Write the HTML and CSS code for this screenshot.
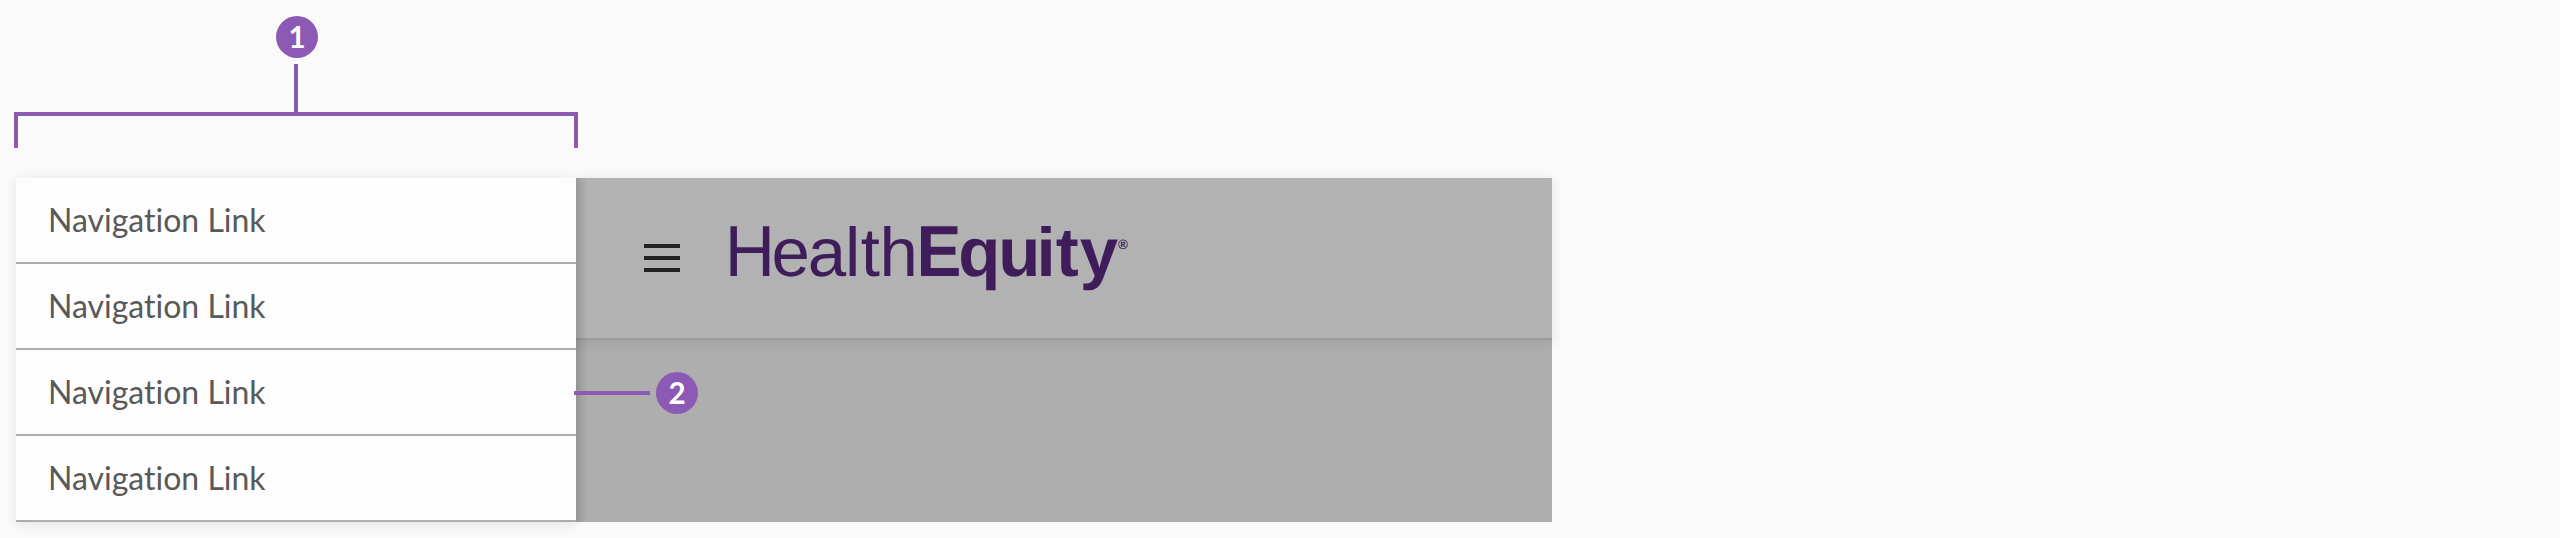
FILE: index.html
```html
<!DOCTYPE html>
<html lang="en">
<head>
<meta charset="utf-8">
<title>Navigation drawer</title>
<link rel="stylesheet" href="styles.css">
</head>
<body>
<main class="figure">
  <div class="callout callout-top">
    <span class="badge">1</span>
    <span class="stem"></span>
    <span class="bracket"></span>
  </div>
  <div class="app">
    <nav class="drawer">
      <a class="link">Navigation Link</a>
      <a class="link">Navigation Link</a>
      <a class="link">Navigation Link</a>
      <a class="link">Navigation Link</a>
    </nav>
    <section class="page">
      <header class="header">
        <span class="menu"><i></i><i></i><i></i></span>
        <svg class="logo" width="420" height="100" viewBox="0 0 420 100">
          <text class="logo-cap" y="70" x="4.9" transform="scale(.96 1)">H</text>
          <text class="logo-light" y="70" x="51.5 87.8 125.1 140.7 159.5">ealth</text>
          <text class="logo-cap logo-bold" y="70" x="211.4" transform="scale(.93 1)">E</text>
          <text class="logo-bold" y="70" x="238.3 278.2 316.4 335.8 359.7">quity</text>
          <text class="logo-mark" y="43" x="398">®</text>
        </svg>
      </header>
    </section>
    <div class="callout callout-side">
      <span class="rule"></span>
      <span class="badge">2</span>
    </div>
  </div>
</main>
</body>
</html>
```
FILE: styles.css
```css
* { box-sizing: border-box; }
body {
  margin: 0;
  height: 538px;
  overflow: hidden;
  background: #fafafa;
  font-family: Lato, sans-serif;
}
.figure { width: 1552px; padding: 16px 0 0 16px; }
.callout-top {
  display: flex;
  flex-direction: column;
  align-items: center;
  width: 564px;
  height: 162px;
  margin-left: -2px;
}
.badge {
  width: 42px;
  height: 42px;
  border-radius: 50%;
  background: #8c5ab5;
  color: #fff;
  font-size: 29.5px;
  font-weight: 700;
  line-height: 41px;
  text-align: center;
}
.callout-top .badge { margin-left: 2px; }
.stem { width: 4px; height: 48px; margin-top: 6px; background: #8c5ab5; }
.bracket {
  width: 564px;
  height: 36px;
  border: 4px solid #8c5ab5;
  border-bottom: 0;
}
.app { position: relative; display: flex; height: 344px; }
.drawer {
  position: relative;
  z-index: 1;
  width: 560px;
  background: #fdfdfd;
  box-shadow: 0 2px 12px rgba(0, 0, 0, .1);
}
.link {
  display: block;
  height: 86px;
  padding-left: 32px;
  border-bottom: 2px solid #adadad;
  color: #595959;
  font-size: 32px;
  line-height: 84px;
  font-variant-ligatures: none;
}
.page { position: relative; flex: 1; background: #aeaeae; }
/* Extra depth where the drawer overlaps the dimmed page */
.page::after {
  content: "";
  position: absolute;
  inset: 0 auto 0 0;
  width: 12px;
  background: linear-gradient(to right, rgba(0, 0, 0, .1), rgba(0, 0, 0, 0));
}
.header {
  display: flex;
  align-items: flex-start;
  height: 162px;
  padding: 28px 0 0 68px;
  border-bottom: 2px solid #9b9b9b;
  background: #b2b2b2;
  box-shadow: 0 2px 12px rgba(0, 0, 0, .1);
}
.menu { display: grid; gap: 8px; width: 36px; margin-top: 38px; }
.menu i { height: 4px; background: #222; }
.logo {
  margin-left: 40px;
  fill: #3f1d5b;
  font-family: "Liberation Sans", Arial, sans-serif;
  font-size: 69px;
  text-rendering: geometricPrecision;
}
.logo-cap { font-size: 72.5px; }
.logo-bold { font-weight: 700; }
.logo-mark { font-size: 13.5px; font-weight: 700; }
.callout-side {
  position: absolute;
  z-index: 2;
  left: 558px;
  top: 194px;
  display: flex;
  align-items: center;
  gap: 6px;
}
.rule { width: 76px; height: 4px; background: #8c5ab5; }
```
